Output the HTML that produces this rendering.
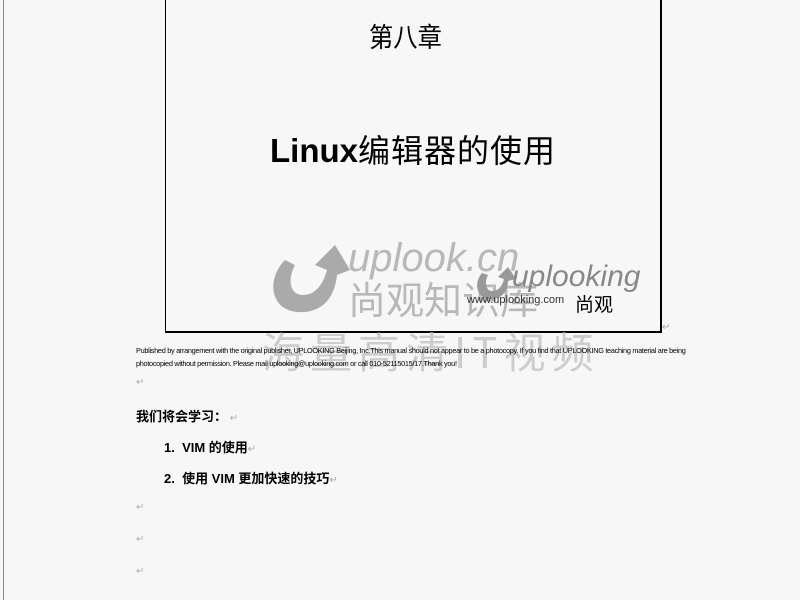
<!DOCTYPE html>
<html><head><meta charset="utf-8"><style>
body{margin:0;width:800px;height:600px;background:#f7f7f7;position:relative;overflow:hidden;font-family:"Liberation Sans","Noto Sans CJK SC",sans-serif;color:#000}
.edge{position:absolute;left:3px;top:0;width:1px;height:600px;background:#888}
.box{position:absolute;left:165px;top:-2px;width:494px;height:332px;border:1px solid #000;border-right:2px solid #000;border-bottom:2px solid #000}
.a{position:absolute;white-space:nowrap}
.wm{color:#b8b8b8}
.pm{color:#aaa;font-size:10px}
</style></head><body>
<div class="edge"></div>
<div class="box"></div>
<div class="a" style="left:369px;top:16px;font-size:27px;font-family:'Noto Sans CJK SC',sans-serif;transform:scaleX(0.9);transform-origin:left">第八章</div>
<div class="a" style="left:270px;top:126px;font-size:33px;"><b>Linux</b><span style="font-family:'Noto Sans CJK SC',sans-serif;font-size:32px;letter-spacing:1px">编辑器的使用</span></div>
<svg class="a" style="left:265px;top:240px" width="90" height="80" viewBox="0 0 90 80"><path d="M20 20 C0 40 5 75 40 72 C60 70 70 55 72 35 L85 30 L70 5 L50 25 L62 30 C58 45 50 55 38 55 C25 55 22 40 30 25 Z" fill="#aaa"/></svg>
<div class="a wm" style="left:348px;top:236px;font-size:40px;font-style:italic">uplook.cn</div>
<div class="a wm" style="left:348px;top:270px;font-size:38px;font-family:'Noto Sans CJK SC',sans-serif">尚观知识库</div>
<svg class="a" style="left:470px;top:265px" width="50" height="40" viewBox="0 0 50 40"><path d="M12 8 C2 20 8 36 24 34 C34 32 38 24 38 16 L46 14 L38 2 L28 12 L34 14 C32 22 28 26 22 26 C16 26 14 18 18 10 Z" fill="#999"/></svg>
<div class="a" style="left:512px;top:260px;font-size:30px;font-style:italic;color:#888">uplooking</div>
<div class="a" style="left:467px;top:294px;font-size:11px;color:#333">www.uplooking.com</div>
<div class="a" style="left:575px;top:290px;font-size:19px;font-family:'Noto Sans CJK SC',sans-serif">尚观</div>
<div class="a wm" style="left:262px;top:320px;font-size:42px;font-family:'Noto Sans CJK SC',sans-serif;color:#ccc;letter-spacing:6px">海量高清IT视频</div>
<div class="a pm" style="left:662px;top:322px">↵</div>
<div class="a" style="left:136px;top:346px;font-size:7.4px;letter-spacing:-0.3px;transform:scaleX(0.99);transform-origin:left">Published by arrangement with the original publisher, UPLOOKING Beijing, Inc.This manual should not appear to be a photocopy. If you find that UPLOOKING teaching material are being</div>
<div class="a" style="left:136px;top:359px;font-size:7.4px;letter-spacing:-0.3px;transform:scaleX(0.99);transform-origin:left">photocopied without permission. Please mail uplooking@uplooking.com or call 010-52115015/17.Thank you!</div>
<div class="a pm" style="left:136px;top:377px">↵</div>
<div class="a" style="left:136px;top:406px;font-size:13px;font-weight:bold">我们将会学习：<span class="pm" style="font-weight:normal"> ↵</span></div>
<div class="a" style="left:164px;top:437px;font-size:13px;font-weight:bold">1.&nbsp; VIM 的使用<span class="pm" style="font-weight:normal">↵</span></div>
<div class="a" style="left:164px;top:468px;font-size:13px;font-weight:bold">2.&nbsp; 使用 VIM 更加快速的技巧<span class="pm" style="font-weight:normal">↵</span></div>
<div class="a pm" style="left:136px;top:502px">↵</div>
<div class="a pm" style="left:136px;top:534px">↵</div>
<div class="a pm" style="left:136px;top:566px">↵</div>
</body></html>
